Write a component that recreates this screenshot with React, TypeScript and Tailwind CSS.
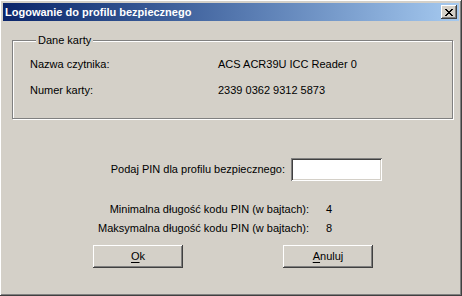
const raised =
  'shadow-[inset_-1px_-1px_#404040,inset_1px_1px_#ffffff,inset_-2px_-2px_#808080,inset_2px_2px_#d4d0c8]';

export default function App() {
  return (
    <div
      className={`w-[462px] h-[296px] bg-[#d4d0c8] p-[3px] flex flex-col text-[11px] text-black ${raised}`}
      style={{ fontFamily: '"Liberation Sans", Arial, sans-serif' }}
    >
      {/* title bar */}
      <div className="h-[18px] flex items-center justify-between bg-gradient-to-r from-[#0a246a] to-[#a6caf0] pl-[2px] pr-[2px]">
        <span className="text-white font-bold text-[11px] leading-none">Logowanie do profilu bezpiecznego</span>
        <button
          className={`w-[16px] h-[14px] bg-[#d4d0c8] flex items-center justify-center ${raised}`}
        >
          <svg width="8" height="7" viewBox="0 0 8 7" shapeRendering="crispEdges">
            <path
              d="M0 0h2v1h-2zM6 0h2v1h-2zM1 1h2v1h-2zM5 1h2v1h-2zM2 2h4v1h-4zM3 3h2v1h-2zM2 4h4v1h-4zM1 5h2v1h-2zM5 5h2v1h-2zM0 6h2v1h-2zM6 6h2v1h-2z"
              fill="#000"
            />
          </svg>
        </button>
      </div>

      {/* card group */}
      <fieldset className="ml-[9px] mt-[13px] w-[441px] h-[85px] border border-[#808080] shadow-[1px_1px_0_#ffffff,inset_1px_1px_0_#ffffff] px-[17px]">
        <legend className="ml-[6px] px-[2px] bg-[#d4d0c8] leading-[13px]">Dane karty</legend>
        <div className="grid grid-cols-[188px_1fr] gap-y-[13px] mt-[11px]">
          <span className="leading-[13px]">Nazwa czytnika:</span>
          <span className="leading-[13px]">ACS ACR39U ICC Reader 0</span>
          <span className="leading-[13px]">Numer karty:</span>
          <span className="leading-[13px]">2339 0362 9312 5873</span>
        </div>
      </fieldset>

      {/* pin */}
      <div className="flex items-center mt-[39px]">
        <span className="w-[282px] text-right leading-[13px]">Podaj PIN dla profilu bezpiecznego:</span>
        <input
          type="password"
          className="ml-[6px] w-[91px] h-[23px] bg-white outline-none shadow-[inset_1px_1px_#808080,inset_-1px_-1px_#ffffff,inset_2px_2px_#404040,inset_-2px_-2px_#d4d0c8]"
        />
      </div>

      <div className="flex flex-col gap-[6px] mt-[22px]">
        <div className="flex">
          <span className="w-[306px] text-right leading-[13px]">Minimalna długość kodu PIN (w bajtach):</span>
          <span className="ml-[17px] leading-[13px]">4</span>
        </div>
        <div className="flex">
          <span className="w-[306px] text-right leading-[13px]">Maksymalna długość kodu PIN (w bajtach):</span>
          <span className="ml-[17px] leading-[13px]">8</span>
        </div>
      </div>

      {/* buttons */}
      <div className="flex mt-[10px] pl-[90px] gap-[100px]">
        <button className={`w-[90px] h-[23px] bg-[#d4d0c8] ${raised}`}>
          <span className="underline underline-offset-2">O</span>k
        </button>
        <button className={`w-[90px] h-[23px] bg-[#d4d0c8] ${raised}`}>
          <span className="underline underline-offset-2">A</span>nuluj
        </button>
      </div>
    </div>
  );
}
